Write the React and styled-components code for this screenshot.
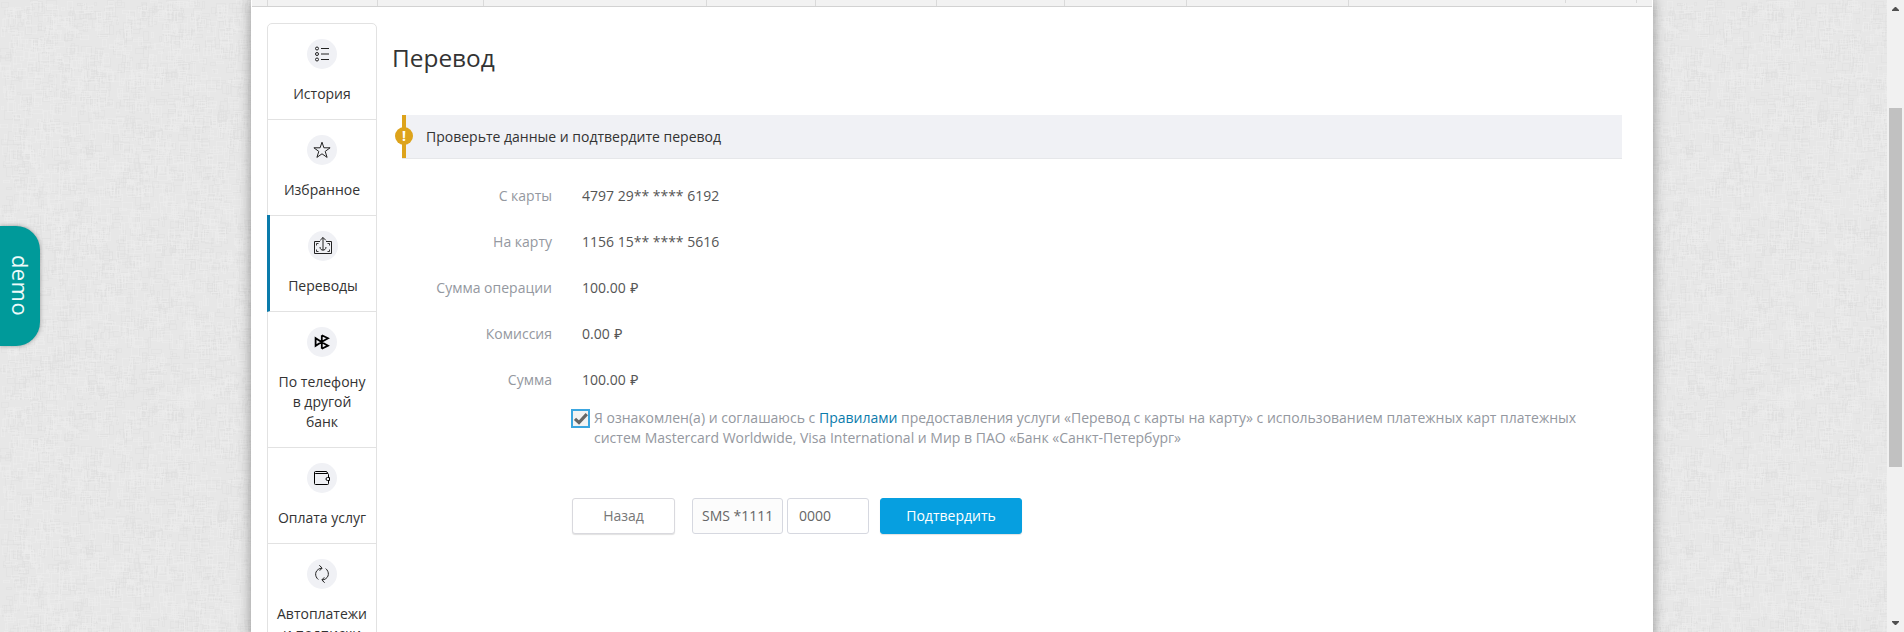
import React from "react";
import styled, { createGlobalStyle, css } from "styled-components";

const Global = createGlobalStyle`
  * { box-sizing: border-box; }
  html, body { margin: 0; padding: 0; }
  body { overflow: hidden; background: #e7e7e7; font: 14px/20px "Open Sans", "Noto Sans", sans-serif; color: #333; }
`;

const Screen = styled.div`
  position: relative; display: flex; justify-content: space-between;
  width: 1904px; height: 632px; overflow: hidden;
`;
const Texture = styled.svg`position: absolute; inset: 0; width: 100%; height: 100%;`;
const Page = styled.div`
  position: relative; width: 1402px; height: 640px; margin-left: 251px; background: #fff;
  box-shadow: 0 0 12px rgba(0, 0, 0, 0.38);
`;
const Tabs = styled.div`
  display: flex; height: 7px; margin: 0 1px; background: #f2f2f2; border-bottom: 1px solid #d2d2d2;
`;
const Tab = styled.div`width: ${(p) => p.$w}px; height: ${(p) => (p.$short ? 3 : 6)}px; border-right: 1px solid #dadada;`;
const Body = styled.div`display: flex; padding: 16px 31px 0 16px;`;
const Side = styled.nav`
  width: 110px; height: 640px; flex: none; border: 1px solid #e2e2e2; border-radius: 5px 5px 0 0;
`;
const Item = styled.a`
  display: flex; flex-direction: column; align-items: center; gap: 15px; padding: 15px 8px;
  border-bottom: 1px solid #e2e2e2; text-align: center;
  ${(p) => p.$active && css`margin-left: -1px; border-left: 3px solid #0b7bab; position: relative; &::before { content: ""; position: absolute; left: -3px; top: -1px; width: 3px; height: 1px; background: #0b7bab; }`}
`;
const Circle = styled.span`
  display: flex; align-items: center; justify-content: center; width: 30px; height: 30px;
  border-radius: 50%; background: #f0f1f5;
  svg { display: block; width: 18px; height: 18px; fill: none; stroke: #222; }
`;
const Main = styled.main`flex: 1; padding-left: 16px;`;
const Title = styled.h1`margin: 17px 0 0 -1px; font-size: 24.4px; line-height: 36px; font-weight: 400;`;
const Alert = styled.div`
  position: relative; display: flex; align-items: center; height: 44px; margin: 39px 0 0 9px; padding: 1px 0 0 24px;
  background: #f0f1f5; border-bottom: 1px solid #e6e7ea;
  &::before { content: ""; position: absolute; left: 0; top: 0; width: 4px; height: 43px; background: #dda31b; }
`;
const Badge = styled.span`
  position: absolute; left: -7px; top: 12px; width: 18px; height: 18px; border-radius: 50%;
  background: #dda31b; color: #fff; font-weight: 700; font-size: 14px; line-height: 18px; text-align: center;
`;
const Details = styled.dl`
  display: grid; grid-template-columns: 159px 1fr; column-gap: 30px; row-gap: 26px; margin: 27px 0 0;
`;
const Term = styled.dt`text-align: right; color: #9498a0;`;
const Value = styled.dd`margin: 0; color: #555; word-spacing: ${(p) => (p.$money ? 1 : 0)}px;`;
const Agreement = styled.label`
  display: flex; gap: 4px; margin: 18px 0 0 178px; color: #9498a0;
`;
const Check = styled.span`
  display: block; flex: none; width: 19px; height: 19px; margin-top: 1px; border: 2px solid #3ba6e0; background: #f3f3f3;
  svg { display: block; }
`;
const Terms = styled.span`width: 1000px;`;
const Link = styled.a`color: #0b7bab;`;
const Actions = styled.div`display: flex; margin: 50px 0 0 179px;`;
const Button = styled.button`
  width: ${(p) => p.$w}px; height: 36px; padding: 0 0 1px; border-radius: 3px; font: inherit;
  border: 1px solid ${(p) => (p.$primary ? "#069fe0" : "#d9d9de")};
  background: ${(p) => (p.$primary ? "#069fe0" : "#fff")};
  color: ${(p) => (p.$primary ? "#fff" : "#777")};
  ${(p) => p.$primary && "font-weight: 500;"}
  box-shadow: 0 1px 1px rgba(0, 0, 0, 0.12);
`;
const Field = styled.div`
  display: flex; align-items: center; width: ${(p) => p.$w}px; height: 36px; padding: 0 0 1px ${(p) => p.$pad}px;
  margin-left: ${(p) => p.$gap}px; border: 1px solid #d6d8e0; border-radius: 3px; color: #666;
  background: ${(p) => (p.$muted ? "#fcfcfc" : "#fff")};
`;
const Spacer = styled.span`width: 11px;`;
const Demo = styled.div`
  position: absolute; left: 0; top: 226px; width: 40px; height: 120px; border-radius: 0 24px 24px 0;
  display: flex; align-items: center; justify-content: center; padding-left: 2px;
  background: #009a9a; box-shadow: 0 0 4px rgba(0, 0, 0, 0.35);
`;
const DemoText = styled.span`
  writing-mode: vertical-rl; font-size: 22px; line-height: 30px; letter-spacing: 0.4px; color: #eefafa;
`;
const Scrollbar = styled.div`
  position: relative; display: flex; flex-direction: column; align-items: center; justify-content: space-between;
  width: 17px; height: 632px; padding: 7px 0; background: #f1f1f1;
  svg { display: block; fill: #505050; }
`;
const Thumb = styled.div`position: absolute; left: 2px; top: 108px; width: 13px; height: 359px; background: #c1c1c1;`;

const weave = (() => {
  let s = 7;
  const rnd = () => ((s = (s * 16807) % 2147483647) / 2147483647);
  const light = [];
  const dark = [];
  for (let i = 0; i < 5200; i++) {
    const x = Math.floor(rnd() * 400), y = Math.floor(rnd() * 400);
    const w = 2 + Math.floor(rnd() * 9), h = 2 + Math.floor(rnd() * 9);
    (i % 2 ? light : dark).push(`M${x + 0.5} ${y + 0.5}h${w}v${h}h${-w}z`);
  }
  return { light: light.join(""), dark: dark.join("") };
})();

const ListIcon = () => (
  <svg viewBox="0 0 18 18">
    <g><circle cx="4" cy="3.5" r="1.5" /><circle cx="4" cy="9" r="1.5" /><circle cx="4" cy="14.5" r="1.5" /></g>
    <path d="M8 3.5h8M8 9h8M8 14.5h8" />
  </svg>
);
const StarIcon = () => (
  <svg viewBox="0 0 18 18"><path d="M9 1.2l1.9 5.6h6.2l-4.9 3.6 1.9 6L9 12.8l-5.1 3.6 1.9-6L.9 6.8h6.2z" /></svg>
);
const TransferIcon = () => (
  <svg viewBox="0 0 18 18">
    <path d="M6 4.500H.500v12h17v-12H12M9 13V.500M6.200 3.300L9 .500l2.800 2.800M6 10c0 4.200 6 4.200 6 0" />
    <path strokeWidth=".9" d="M2.500 8.500v-2h2M15.500 8.500v-2h-2M2.500 12.500v2h2M15.500 12.500v2h-2" />
  </svg>
);
const SbpIcon = () => (
  <svg viewBox="0 0 18 18">
    <path stroke="#000" strokeWidth="1.8" d="M2.6 5.2v7.6l6-3.8zM8.8 2.3v13.4M8.8 2.3l6.2 3-6.2 3.5M8.8 9.2l6.2 3.4-6.2 3.1" />
  </svg>
);
const WalletIcon = () => (
  <svg viewBox="0 0 18 18">
    <path stroke="#000" d="M15.5 8V5.500q0-1-1-1h-12q-1 0-1-1t1-1h10.500q1.500 0 1.500 2M1.500 3.500v11q0 1 1 1h12q1 0 1-1V12M16.500 8.500h-2a1.500 1.500 0 0 0 0 3h2z" />
  </svg>
);
const RepeatIcon = () => (
  <svg viewBox="0 0 18 18">
    <path d="M5.3 14.5C1.5 11.5 1.5 5.5 7 3.5l2-.4M6.3.3L9.2 3 6.7 5.7M12.7 3.6c3.8 3 3.8 9-1.7 11l-2 .4M11.7 17.7L8.8 15l2.5-2.7" />
  </svg>
);

const items = [
  [ListIcon, "История"],
  [StarIcon, "Избранное"],
  [TransferIcon, "Переводы"],
  [SbpIcon, "По телефону в другой банк"],
  [WalletIcon, "Оплата услуг"],
  [RepeatIcon, "Автоплатежи и подписки"],
];
const rows = [
  ["С карты", "4797 29** **** 6192"],
  ["На карту", "1156 15** **** 5616"],
  ["Сумма операции", "100.00 ₽"],
  ["Комиссия", "0.00 ₽"],
  ["Сумма", "100.00 ₽"],
];
const tabs = [16, 110, 106, 223, 109, 121, 128, 122, 162, 217, 71];

export default function App() {
  return (
    <Screen>
      <Global />
      <Texture aria-hidden="true">
        <pattern id="weave" width="400" height="400" patternUnits="userSpaceOnUse">
          <path d={weave.dark} fill="none" stroke="#dedede" strokeOpacity=".45" />
          <path d={weave.light} fill="none" stroke="#ededed" strokeOpacity=".5" />
        </pattern>
        <rect width="100%" height="100%" fill="url(#weave)" />
      </Texture>
      <Page>
        <Tabs>{tabs.map((w, i) => <Tab key={i} $w={w} $short={i > 8} />)}</Tabs>
        <Body>
          <Side>
            {items.map(([Icon, label]) => (
              <Item key={label} $active={label === "Переводы"}>
                <Circle><Icon /></Circle>
                <span>{label}</span>
              </Item>
            ))}
          </Side>
          <Main>
            <Title>Перевод</Title>
            <Alert><Badge>!</Badge>Проверьте данные и подтвердите перевод</Alert>
            <Details>
              {rows.map(([term, value]) => (
                <React.Fragment key={term}>
                  <Term>{term}</Term>
                  <Value $money={value.endsWith("₽")}>{value}</Value>
                </React.Fragment>
              ))}
            </Details>
            <Agreement>
              <Check>
                <svg width="15" height="15" viewBox="0 0 15 15"><path d="M2 7.8l4 3.8 7.800-8.400" fill="none" stroke="#666" strokeWidth="3.2" /></svg>
              </Check>
              <Terms>
                Я ознакомлен(а) и соглашаюсь с <Link>Правилами</Link> предоставления услуги «Перевод с карты на карту» с использованием платежных карт платежных систем Mastercard Worldwide, Visa International и Мир в ПАО «Банк «Санкт-Петербург»
              </Terms>
            </Agreement>
            <Actions>
              <Button $w={103}>Назад</Button>
              <Field $w={91} $pad={9} $gap={17} $muted>SMS *1111</Field>
              <Field $w={82} $pad={11} $gap={4}>0000</Field>
              <Spacer />
              <Button $w={142} $primary>Подтвердить</Button>
            </Actions>
          </Main>
        </Body>
      </Page>
      <Scrollbar>
        <svg width="7" height="4" viewBox="0 0 7 4"><path d="M3 0h1l3 3v1H0V3z" /></svg>
        <Thumb />
        <svg width="7" height="4" viewBox="0 0 7 4"><path d="M0 0h7v1L4 4H3L0 1z" /></svg>
      </Scrollbar>
      <Demo><DemoText>demo</DemoText></Demo>
    </Screen>
  );
}
